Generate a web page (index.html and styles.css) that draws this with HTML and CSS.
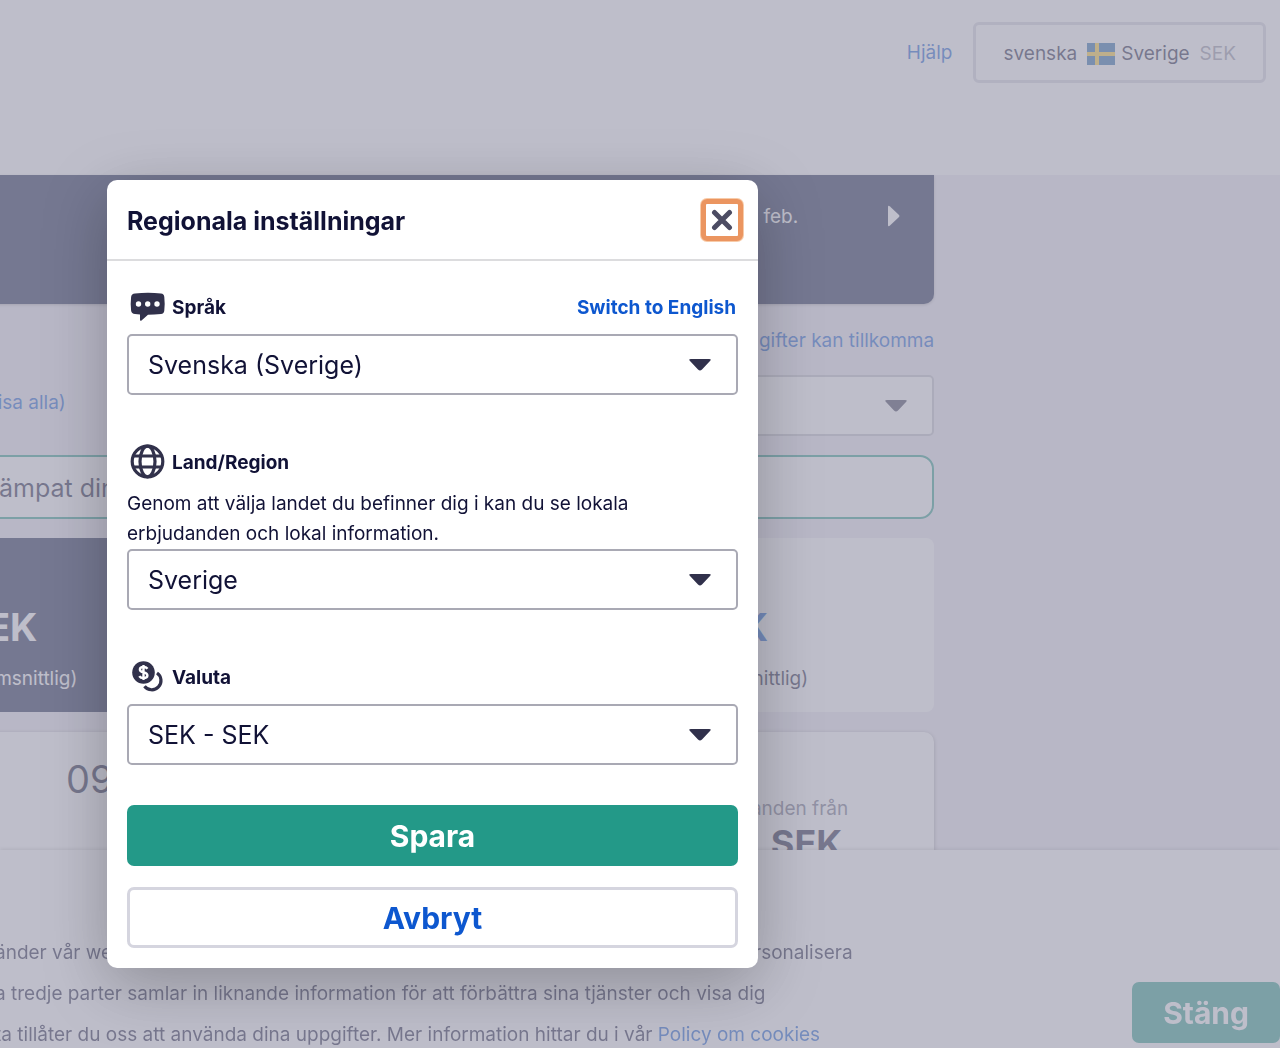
FILE: index.html
```html
<!DOCTYPE html>
<html lang="sv">
<head>
    <meta charset="UTF-8">
    <meta name="viewport" content="width=device-width, initial-scale=1.0">
    <title>Regionala inställningar</title>
    <link rel="stylesheet" href="styles.css">
</head>
<body>

    <header class="header">
        <a href="#" class="help-link">Hjälp</a>
        <button class="locale-button" type="button">
            <span>svenska</span>
            <svg class="flag" viewBox="0 0 28 22" aria-hidden="true">
                <rect width="28" height="22" fill="#1b62a5"/>
                <path d="M8 0h4v22H8z M0 9h28v4H0z" fill="#ffcd2e"/>
            </svg>
            <span>Sverige</span>
            <span class="currency">SEK</span>
        </button>
    </header>

    <main class="page">
        <div class="results">
            <div class="date-bar">
                <span>0 feb.</span>
                <button class="next-day" type="button" aria-label="Nästa dag">
                    <svg width="12" height="22" viewBox="0 0 12 22"><path d="M0 2q0-2 2-.6L11 10q1 1 0 2L2 20.600q-2 1.400-2-.6z" fill="#fff"/></svg>
                </button>
            </div>
            <a href="#" class="fees-link">gifter kan tillkomma</a>
            <div class="sort-row">
                <a href="#">visa alla)</a>
                <select class="select sort-select" aria-label="Sortera efter">
                    <option></option>
                </select>
            </div>
            <div class="notice">ämpat din</div>
            <div class="tabs">
                <div class="tab active">
                    <strong>EK</strong>
                    <span>msnittlig)</span>
                </div>
                <div class="tab"></div>
                <div class="tab">
                    <strong>K</strong>
                    <span>nittlig)</span>
                </div>
            </div>
            <div class="ticket">
                <span class="time">09</span>
                <div class="offer">
                    <span>anden från</span>
                    <strong>SEK</strong>
                </div>
            </div>
        </div>
    </main>

    <div class="cookie-banner">
        <div class="cookie-text">
            <div class="cookie-line"><span>änder vår we</span><span>personalisera</span></div>
            <div>a tredje parter samlar in liknande information för att förbättra sina tjänster och visa dig</div>
            <div>ta tillåter du oss att använda dina uppgifter. Mer information hittar du i vår <a href="#">Policy om cookies</a></div>
        </div>
        <button class="button primary" type="button">Stäng</button>
    </div>

    <div class="overlay">
        <form class="modal" role="dialog" aria-labelledby="modal-title">
            <div class="modal-header">
                <h1 id="modal-title">Regionala inställningar</h1>
                <button class="close-button" type="button" aria-label="Stäng">
                    <svg width="22" height="22" viewBox="0 0 22 22"><path d="M3.500 3.500l15 15M18.500 3.500l-15 15" stroke="#4c4c63" stroke-width="5" stroke-linecap="round"/></svg>
                </button>
            </div>
            <div class="modal-body">
                <div class="field">
                    <div class="field-label">
                        <svg width="36" height="30" viewBox="0 0 36 30" aria-hidden="true">
                            <path d="M5 1.500Q18 0 31 1.500q3 .4 3.300 3.500.8 7 0 13.500-.3 3.200-3.300 3.500-7 .8-13 .8L11.500 28.500q-1.500 1-1.500-.8V22.600L5 22Q1.500 21.700 1.100 18.500.3 12 1.100 5 1.500 1.900 5 1.500z" fill="#31314b"/>
                            <circle cx="8.500" cy="12" r="2.700" fill="#fff"/>
                            <circle cx="17.700" cy="12" r="2.700" fill="#fff"/>
                            <circle cx="27" cy="12" r="2.700" fill="#fff"/>
                        </svg>
                        <label for="language">Språk</label>
                        <a href="#" class="switch-link">Switch to English</a>
                    </div>
                    <select class="select" id="language">
                        <option>Svenska (Sverige)</option>
                    </select>
                </div>

                <div class="field">
                    <div class="field-label">
                        <svg width="36" height="36" viewBox="0 0 36 36" fill="none" stroke="#31314b" stroke-width="3.200" aria-hidden="true">
                            <circle cx="17.500" cy="17.500" r="15.300"/>
                            <ellipse cx="17.500" cy="17.500" rx="7.500" ry="15.300"/>
                            <path d="M3.500 12h28M3.500 23h28"/>
                        </svg>
                        <label for="country">Land/Region</label>
                    </div>
                    <p>Genom att välja landet du befinner dig i kan du se lokala erbjudanden och lokal information.</p>
                    <select class="select" id="country">
                        <option>Sverige</option>
                    </select>
                </div>

                <div class="field">
                    <div class="field-label">
                        <svg width="36" height="36" viewBox="0 0 36 36" fill="none" aria-hidden="true">
                            <circle cx="13.500" cy="13.500" r="11.300" fill="#31314b"/>
                            <path d="M17.500 9.800q-1.300-1.800-4-1.800-3.600 0-3.600 2.500 0 2.200 3.600 2.900 3.900.7 3.900 3.100 0 2.600-3.900 2.600-3 0-4.200-2M13.500 6v15" stroke="#fff" stroke-width="2.400"/>
                            <path d="M27 14a9.200 9.200 0 1 1-12.500 13.200" stroke="#31314b" stroke-width="3.200"/>
                        </svg>
                        <label for="currency">Valuta</label>
                    </div>
                    <select class="select" id="currency">
                        <option>SEK - SEK</option>
                    </select>
                </div>

                <div class="actions">
                    <button class="button primary" type="submit">Spara</button>
                    <button class="button secondary" type="button">Avbryt</button>
                </div>
            </div>
        </form>
    </div>

</body>
</html>
```
FILE: styles.css
```css
* {
    box-sizing: border-box;
}
body {
    font-family: Inter, "Liberation Sans", sans-serif;
    font-size: 19px;
    color: #111236;
    background-color: #ebe8f2;
    margin: 0;
    height: 100vh;
    overflow: hidden;
}
button, select {
    font-family: inherit;
    color: inherit;
    cursor: pointer;
}
a {
    color: #0d57cf;
    text-decoration: none;
}

/* page */
.header {
    display: flex;
    justify-content: flex-end;
    align-items: flex-start;
    gap: 21px;
    height: 175px;
    padding: 22px 14px;
    background: #fff;
}
.help-link {
    line-height: 61px;
}
.locale-button {
    display: flex;
    align-items: center;
    gap: 10px;
    height: 61px;
    padding: 2px 27px 0;
    background: none;
    border: 3px solid #d2d2dc;
    border-radius: 6px;
    font-size: 19px;
}
.flag {
    width: 28px;
    height: 22px;
}
.flag + span {
    margin-left: -4px;
}
.currency {
    color: #8f90a0;
}
.results {
    width: 74vw;
    margin-left: -13px;
}
.date-bar {
    display: flex;
    justify-content: flex-end;
    align-items: flex-start;
    gap: 90px;
    height: 129px;
    padding: 30px 34px;
    background: #0c1642;
    border-radius: 0 0 10px 10px;
    color: #fff;
    box-shadow: 0 1px 3px rgba(0, 0, 0, 0.3);
}
.next-day {
    padding: 0;
    background: none;
    border: none;
}
.fees-link {
    display: block;
    padding: 26px 0 23px;
    line-height: 22px;
    text-align: right;
}
.sort-row {
    display: flex;
    justify-content: space-between;
    align-items: center;
    height: 61px;
    margin-bottom: 19px;
}
.sort-row a {
    padding: 0 0 6px 0;
}
.notice {
    height: 64px;
    padding-left: 10px;
    background: #fff;
    border: 2px solid #239988;
    border-radius: 14px;
    font-size: 25px;
    line-height: 62px;
}
.tabs {
    display: grid;
    grid-template-columns: 215fr 365fr 365fr;
    height: 174px;
    margin: 19px 0 20px;
    background: #fff;
    border-radius: 8px;
}
.tab {
    display: flex;
    flex-direction: column;
    align-items: flex-end;
    justify-content: flex-end;
    gap: 17px;
    padding: 0 126px 22px 0;
}
.tab strong {
    margin-right: 40px;
    font-size: 38px;
    color: #0d57cf;
}
.tab.active {
    background: #0c1642;
    color: #fff;
}
.tab.active strong {
    color: #fff;
}
.ticket {
    display: flex;
    justify-content: space-between;
    height: 300px;
    padding: 24px 86px 0 79px;
    background: #fff;
    border-radius: 10px;
    box-shadow: 0 1px 4px rgba(0, 0, 0, 0.4);
}
.time {
    font-size: 38px;
}
.offer {
    display: flex;
    flex-direction: column;
    align-items: flex-end;
    gap: 3px;
    padding-top: 41px;
    color: #68697f;
}
.offer strong {
    padding-right: 6px;
    font-size: 36px;
    line-height: 40px;
    color: #111236;
}

/* cookies */
.cookie-banner {
    position: fixed;
    right: 0;
    bottom: 0;
    left: 0;
    display: flex;
    justify-content: space-between;
    align-items: flex-end;
    height: 198px;
    background: #fff;
    box-shadow: 0 -1px 4px rgba(0, 0, 0, 0.2);
}
.cookie-text {
    margin: 0 0 -7px -5px;
    line-height: 41px;
    white-space: nowrap;
}
.cookie-line {
    display: flex;
    justify-content: space-between;
    width: 67vw;
}
.cookie-banner .button {
    margin-bottom: 5px;
    padding: 0 31px;
}

/* modal */
.overlay {
    position: fixed;
    inset: 0;
    padding: 180px 107px 0;
    background: rgba(162, 162, 179, 0.7);
}
.modal {
    max-width: 651px;
    background: #fff;
    border-radius: 10px;
    box-shadow: 0 16px 64px rgba(0, 0, 0, 0.26);
}
.modal-header {
    display: flex;
    justify-content: space-between;
    align-items: center;
    height: 81px;
    padding: 0 15px 0 20px;
    border-bottom: 2px solid #dcdcde;
}
.modal-header h1 {
    margin: 0;
    padding-top: 2px;
    font-size: 25px;
}
.close-button {
    display: flex;
    align-items: center;
    justify-content: center;
    width: 42px;
    height: 42px;
    padding: 0;
    background: #fff;
    border: 5px solid #eb9560;
    border-radius: 6px;
    box-shadow: 0 0 0 1px #f7cba9;
}
.modal-body {
    display: flex;
    flex-direction: column;
    gap: 40px;
    padding: 19px 20px 20px;
}
.field-label {
    display: flex;
    align-items: center;
    gap: 6px;
    height: 54px;
    padding: 0 2px 0 3px;
    font-weight: 700;
}
.switch-link {
    margin-left: auto;
}
.field p {
    margin: 0;
    padding-right: 60px;
    line-height: 30px;
}
.select {
    display: block;
    width: 100%;
    height: 61px;
    padding: 0 60px 0 19px;
    appearance: none;
    background: #fff url("data:image/svg+xml,%3Csvg xmlns='http://www.w3.org/2000/svg' width='22' height='12'%3E%3Cpath d='M2 0h18q3 0 1 2l-8 8.500q-2 2-4 0L1 2Q-1 0 2 0z' fill='%2331314b'/%3E%3C/svg%3E") no-repeat right 25px center;
    border: 2px solid #a9a9b4;
    border-radius: 5px;
    font-size: 25px;
}
.sort-select {
    width: 360px;
    border-color: #c0c0c8;
}
.actions {
    display: flex;
    flex-direction: column;
    gap: 21px;
}
.button {
    height: 61px;
    border: none;
    border-radius: 7px;
    font-size: 30px;
    font-weight: 700;
}
.primary {
    background: #239988;
    color: #fff;
}
.secondary {
    background: #fff;
    border: 3px solid #d5d5df;
    color: #0d57cf;
}
```
